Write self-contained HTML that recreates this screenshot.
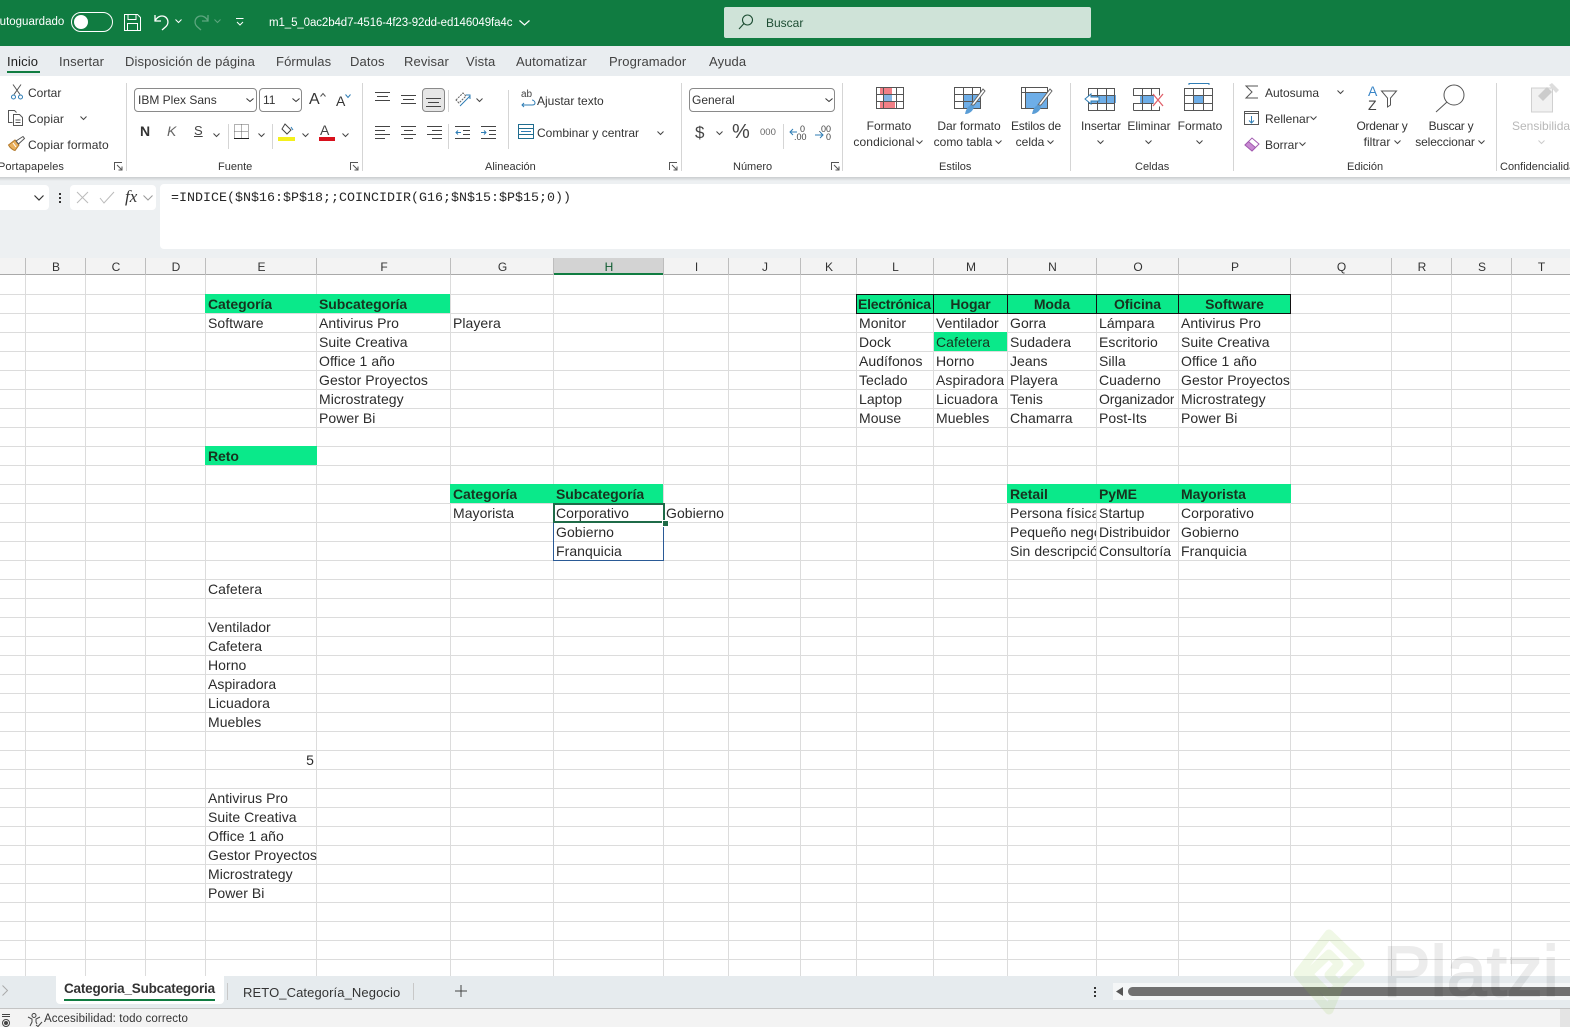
<!DOCTYPE html>
<html lang="es"><head><meta charset="utf-8"><title>Excel</title>
<style>
html,body{margin:0;padding:0;width:1570px;height:1027px;overflow:hidden;background:#fff;font-family:"Liberation Sans",sans-serif;color:#262626}
#p{position:relative;width:1570px;height:1027px;overflow:hidden}
.a{position:absolute}
.w{position:absolute;top:0;width:0;height:0}
.u{position:absolute;font-size:12px;line-height:16px;white-space:nowrap;color:#333}
.c{text-align:center}
.tab{position:absolute;top:54px;font-size:13px;line-height:16px;color:#424242;white-space:nowrap;letter-spacing:.13px}
.g{position:absolute;top:159px;font-size:11px;line-height:16px;color:#333;white-space:nowrap}
.sep{position:absolute;width:1px;background:#d5d5d5}
.vl{position:absolute;top:275px;height:701px;width:1px;background:#dcdcdc}
.hl{position:absolute;top:258px;height:17px;width:1px;background:#bdbdbd}
.ch{position:absolute;top:258px;height:17px;line-height:19px;font-size:12px;text-align:center;color:#333;padding-left:2px;box-sizing:border-box}
.t{position:absolute;font-size:14px;line-height:21px;height:20px;white-space:nowrap;overflow:hidden;color:#2b2b2b;letter-spacing:.05px}
.b{font-weight:bold;color:#17331f;letter-spacing:-.05px}
.f{position:absolute;background:#0ae98a;height:19px}
svg{position:absolute;overflow:visible}
.bd{position:absolute;background:#fff;border:1px solid #8a8a8a;border-radius:4px;box-sizing:border-box;font-size:12px;line-height:22px;padding-left:3px;color:#333}
</style></head><body><div id="p">

<div class="a" style="left:0;top:0;width:1570px;height:46px;background:#107c41"></div>
<div class="u" style="left:-8px;top:14px;color:#fff;font-size:11.500px">Autoguardado</div>
<div class="a" style="left:71px;top:12px;width:42px;height:20px;border:1px solid #fff;border-radius:11px;box-sizing:border-box"></div>
<div class="a" style="left:74px;top:15px;width:14px;height:14px;border-radius:50%;background:#fff"></div>
<svg style="left:124px;top:14px" width="17" height="17" fill="none" stroke="#fff" stroke-width="1"><path d="M.5.500h13l3 3v13H.5zM4 .5v5h8v-5M3.500 16.500v-7h10v7"/></svg>
<svg style="left:154px;top:14px" width="16" height="16" fill="none" stroke="#fff" stroke-width="1.300"><path d="M1 1v6h6M1.300 6.500C3 3 7 1 10.500 2.500c4 2 4.500 7 1.500 10L8 16"/></svg>
<svg style="left:175px;top:19px" width="7" height="5" fill="none" stroke="#fff"><path d="M.5.500l3 3 3-3"/></svg>
<svg style="left:193px;top:14px" width="16" height="16" fill="none" stroke="#5da67f" stroke-width="1.300"><path d="M15 1v6H9M14.700 6.500C13 3 9 1 5.500 2.500c-4 2-4.500 7-1.500 10L8 16"/></svg>
<svg style="left:214px;top:19px" width="7" height="5" fill="none" stroke="#5da67f"><path d="M.5.500l3 3 3-3"/></svg>
<svg style="left:236px;top:18px" width="8" height="8" fill="none" stroke="#fff"><path d="M0 .5h7.500M1 4l3 3 3-3"/></svg>
<div class="u" style="left:269px;top:15px;color:#fff;font-size:11.500px;letter-spacing:-.1px">m1_5_0ac2b4d7-4516-4f23-92dd-ed146049fa4c</div>
<svg style="left:519px;top:20px" width="11" height="6" fill="none" stroke="#fff" stroke-width="1.200"><path d="M.5.500l5 4.500 5-4.500"/></svg>
<div class="a" style="left:724px;top:7px;width:367px;height:31px;background:#cfe3d8;border-radius:2px"></div>
<svg style="left:738px;top:14px" width="16" height="16" fill="none" stroke="#1d4d33" stroke-width="1.100"><circle cx="9.500" cy="6" r="5"/><path d="M6 9.500L1 15"/></svg>
<div class="u" style="left:766px;top:15px;color:#1d4d33;font-size:12px">Buscar</div>

<div class="a" style="left:0;top:46px;width:1570px;height:31px;background:#e9edf0"></div>
<div class="tab" style="left:7px;color:#1e1e1e">Inicio</div>
<div class="a" style="left:7px;top:71px;width:33px;height:2px;background:#107c41"></div>
<div class="tab" style="left:59px">Insertar</div>
<div class="tab" style="left:125px">Disposición de página</div>
<div class="tab" style="left:276px">Fórmulas</div>
<div class="tab" style="left:350px">Datos</div>
<div class="tab" style="left:404px">Revisar</div>
<div class="tab" style="left:466px">Vista</div>
<div class="tab" style="left:516px">Automatizar</div>
<div class="tab" style="left:609px">Programador</div>
<div class="tab" style="left:709px">Ayuda</div>

<div class="a" style="left:0;top:76px;width:1570px;height:101px;background:#fff"></div>
<div class="sep" style="left:126px;top:83px;height:88px"></div>
<div class="sep" style="left:362px;top:83px;height:88px"></div>

<svg style="left:10px;top:84px" width="14" height="16" fill="none" stroke="#555"><path d="M3 .5l7 10M11 .5l-7 10"/><circle cx="3.500" cy="13" r="2" stroke="#2f7db5"/><circle cx="10.500" cy="13" r="2" stroke="#2f7db5"/></svg>
<div class="u" style="left:28px;top:85px">Cortar</div>
<svg style="left:8px;top:110px" width="16" height="16" fill="none" stroke="#555"><path d="M4.500 12.500H.5V.5h6l2 2"/><path d="M5.500 4.500h6l3 3v8h-9z"/><path d="M7.500 10h5M7.500 12.500h5"/></svg>
<div class="u" style="left:28px;top:111px;letter-spacing:.1px">Copiar</div>
<svg style="left:80px;top:116px" width="7" height="5" fill="none" stroke="#444"><path d="M.5.500l3 3 3-3"/></svg>
<svg style="left:8px;top:136px" width="17" height="15"><path d="M.5 9L7 4l4 5-4 5.500C5 14 2 12 .5 9z" fill="#eab05c" stroke="#b37a2b"/><path d="M8 5l7-4.500 1.500 2L10.500 8z" fill="#fff" stroke="#555"/><path d="M5 7l3 4" stroke="#fff"/></svg>
<div class="u" style="left:28px;top:137px;letter-spacing:.1px">Copiar formato</div>
<div class="g" style="left:-2px;letter-spacing:.1px">Portapapeles</div>
<svg style="left:114px;top:162px" width="9" height="9" fill="none" stroke="#555"><path d="M.5 8V.5H8M3 3l5 5M8 4.500V8H4.500"/></svg>

<div class="bd" style="left:134px;top:88px;width:123px;height:24px;line-height:22px;font-size:12px">IBM Plex Sans</div>
<svg style="left:246px;top:98px" width="8" height="5" fill="none" stroke="#333"><path d="M.5.500l3.500 3 3.500-3"/></svg>
<div class="bd" style="left:259px;top:88px;width:43px;height:24px">11</div>
<svg style="left:292px;top:98px" width="8" height="5" fill="none" stroke="#333"><path d="M.5.500l3.500 3 3.500-3"/></svg>
<div class="u" style="left:309px;top:91px;font-size:16px;line-height:18px">A</div>
<svg style="left:320px;top:93px" width="6" height="4" fill="none" stroke="#555"><path d="M.5 3.500l2.500-3 2.500 3"/></svg>
<div class="u" style="left:336px;top:93px;font-size:14px">A</div>
<svg style="left:345px;top:94px" width="6" height="4" fill="none" stroke="#2f7db5"><path d="M.5.500l2.500 3 2.500-3"/></svg>
<div class="u" style="left:140px;top:123px;font-size:14px;font-weight:bold">N</div>
<div class="u" style="left:167px;top:123px;font-size:14px;font-style:italic;color:#666">K</div>
<div class="u" style="left:194px;top:123px;font-size:13px;text-decoration:underline;color:#444">S</div>
<svg style="left:213px;top:133px" width="7" height="5" fill="none" stroke="#444"><path d="M.5.500l3 3 3-3"/></svg>
<div class="sep" style="left:228px;top:124px;height:25px"></div>
<svg style="left:234px;top:124px" width="15" height="15" fill="none" stroke="#666" stroke-dasharray="1 1"><path d="M.5.500h14v14H.5zM7.500.5v14M.5 7.500h14"/><path d="M0 14.500h15" stroke="#222" stroke-dasharray="none"/></svg>
<svg style="left:258px;top:133px" width="7" height="5" fill="none" stroke="#444"><path d="M.5.500l3 3 3-3"/></svg>
<div class="sep" style="left:272px;top:124px;height:25px"></div>
<svg style="left:279px;top:123px" width="16" height="13" fill="none" stroke="#444"><path d="M6 1l6 6-4 4-5-5z"/><path d="M12 4l2 3" stroke="#2f7db5"/></svg>
<div class="a" style="left:278px;top:137px;width:17px;height:4px;background:#f4f01c"></div>
<svg style="left:302px;top:133px" width="7" height="5" fill="none" stroke="#444"><path d="M.5.500l3 3 3-3"/></svg>
<div class="u" style="left:320px;top:122px;font-size:14px;color:#444">A</div>
<div class="a" style="left:319px;top:137px;width:16px;height:4px;background:#d8101c"></div>
<svg style="left:342px;top:133px" width="7" height="5" fill="none" stroke="#444"><path d="M.5.500l3 3 3-3"/></svg>
<div class="g" style="left:218px">Fuente</div>
<svg style="left:350px;top:162px" width="9" height="9" fill="none" stroke="#555"><path d="M.5 8V.5H8M3 3l5 5M8 4.500V8H4.500"/></svg>

<svg style="left:375px;top:92px" width="15" height="12" stroke="#444"><path d="M0 .5h15M2 4.500h11M0 8.500h15" fill="none"/></svg>
<svg style="left:401px;top:95px" width="15" height="12" stroke="#444"><path d="M0 .5h15M2 4.500h11M0 8.500h15" fill="none"/></svg>
<div class="a" style="left:422px;top:88px;width:23px;height:24px;background:#e6e6e6;border:1px solid #8a8a8a;border-radius:4px;box-sizing:border-box"></div>
<svg style="left:426px;top:98px" width="15" height="12" stroke="#444"><path d="M0 .5h15M2 4.500h11M0 8.500h15" fill="none"/></svg>
<div class="sep" style="left:448px;top:90px;height:22px"></div>
<svg style="left:455px;top:92px" width="16" height="15" fill="none"><path d="M1 8l7-7 3 3-7 7z" stroke="#666" stroke-dasharray="2 1"/><path d="M5 14L15 4M11 3h4v4" stroke="#2f7db5"/></svg>
<svg style="left:476px;top:98px" width="7" height="5" fill="none" stroke="#444"><path d="M.5.500l3 3 3-3"/></svg>
<svg style="left:375px;top:126px" width="15" height="13" stroke="#444"><path d="M0 .5h15M0 4.500h10M0 8.500h15M0 12.500h10" fill="none"/></svg>
<svg style="left:401px;top:126px" width="15" height="13" stroke="#444"><path d="M0 .5h15M3 4.500h9M0 8.500h15M3 12.500h9" fill="none"/></svg>
<svg style="left:427px;top:126px" width="15" height="13" stroke="#444"><path d="M0 .5h15M5 4.500h10M0 8.500h15M5 12.500h10" fill="none"/></svg>
<div class="sep" style="left:448px;top:124px;height:25px"></div>
<svg style="left:455px;top:126px" width="15" height="13" fill="none" stroke="#444"><path d="M0 .5h15M8 4.500h7M8 8.500h7M0 12.500h15"/><path d="M6 6.500H1M3 4.500l-2 2 2 2" stroke="#2f7db5"/></svg>
<svg style="left:481px;top:126px" width="15" height="13" fill="none" stroke="#444"><path d="M0 .5h15M8 4.500h7M8 8.500h7M0 12.500h15"/><path d="M0 6.500h5M3 4.500l2 2-2 2" stroke="#2f7db5"/></svg>
<div class="sep" style="left:508px;top:90px;height:59px"></div>

<div class="w" style="left:1px">
<div class="u" style="left:520px;top:90px;font-size:10px;line-height:10px;color:#444">ab</div>
<svg style="left:519px;top:100px" width="16" height="8" fill="none" stroke="#2f7db5"><path d="M2 5h10c2 0 3-1 3-2s-1-3-3-3M4 3L2 5l2 2"/></svg>
<div class="u" style="left:536px;top:93px">Ajustar texto</div>
<svg style="left:517px;top:124px" width="16" height="15" fill="none" stroke="#1f6c8f"><path d="M.5.500h15v14H.5zM.5 4.500h15M.5 10.500h15"/><path d="M3 7.500h10" stroke="#2f7db5"/></svg>
<div class="u" style="left:536px;top:125px">Combinar y centrar</div>
<svg style="left:656px;top:131px" width="7" height="5" fill="none" stroke="#444"><path d="M.5.500l3 3 3-3"/></svg>
<div class="g" style="left:484px">Alineación</div>
<svg style="left:668px;top:162px" width="9" height="9" fill="none" stroke="#555"><path d="M.5 8V.5H8M3 3l5 5M8 4.500V8H4.500"/></svg>
<div class="sep" style="left:680px;top:83px;height:88px"></div>
<div class="bd" style="left:688px;top:88px;width:146px;height:24px;padding-left:2px">General</div>
<svg style="left:824px;top:98px" width="8" height="5" fill="none" stroke="#333"><path d="M.5.500l3.500 3 3.500-3"/></svg>
<div class="u" style="left:694px;top:123px;font-size:17px;line-height:19px;color:#444">$</div>
<svg style="left:715px;top:131px" width="7" height="5" fill="none" stroke="#444"><path d="M.5.500l3 3 3-3"/></svg>
<div class="u" style="left:731px;top:122px;font-size:20px;line-height:20px;color:#444">%</div>
<div class="u" style="left:759px;top:125px;font-size:9.500px;color:#666">000</div>
<div class="sep" style="left:782px;top:124px;height:25px"></div>
<div class="u" style="left:793px;top:125px;font-size:9px;line-height:8px;color:#444;text-align:right;width:11px">0<br>.00</div>
<svg style="left:788px;top:128px" width="8" height="9" fill="none" stroke="#2f7db5"><path d="M8 4H1M4 1L1 4l3 3"/></svg>
<div class="u" style="left:817px;top:125px;font-size:9px;line-height:8px;color:#444;text-align:right;width:13px">.00<br>0</div>
<svg style="left:814px;top:131px" width="9" height="9" fill="none" stroke="#2f7db5"><path d="M0 4h8M5 1l3 3-3 3"/></svg>
<div class="g" style="left:732px">Número</div>
<svg style="left:830px;top:162px" width="9" height="9" fill="none" stroke="#555"><path d="M.5 8V.5H8M3 3l5 5M8 4.500V8H4.500"/></svg>
<div class="sep" style="left:841px;top:83px;height:88px"></div>
</div>

<div class="w" style="left:2px">
<svg style="left:874px;top:87px" width="28" height="22"><rect x="4" y="1" width="12" height="6" fill="#f17f86"/><rect x="7" y="7" width="9" height="7" fill="#82b4e4"/><rect x="4" y="15" width="15" height="6" fill="#f17f86"/><path d="M.5.500h27v21H.5zM.5 7.500h27M.5 14.500h27M7.500.5v21M20.500.5v21" fill="none" stroke="#555"/></svg>
<div class="u c" style="left:847px;top:118px;width:80px">Formato</div>
<div class="u c" style="left:842px;top:134px;width:80px;letter-spacing:.1px">condicional</div>
<svg style="left:914px;top:140px" width="7" height="5" fill="none" stroke="#444"><path d="M.5.500l3 3 3-3"/></svg>
<svg style="left:952px;top:87px" width="32" height="28"><rect x="10" y="8" width="17" height="13" fill="#6eaee8"/><path d="M.5.500h26v21H.5zM.5 7.500h26M.5 14.500h26M9.500.5v21M18.500.5v21" fill="none" stroke="#555"/><path d="M31 4L20 18l-3 0L29 2z" fill="#fff" stroke="#666"/><path d="M11 27c1-5 3-8 6-9l3 1c0 4-4 8-9 8z" fill="#5a9dd6"/></svg>
<div class="u c" style="left:927px;top:118px;width:80px">Dar formato</div>
<div class="u c" style="left:921px;top:134px;width:80px">como tabla</div>
<svg style="left:993px;top:140px" width="7" height="5" fill="none" stroke="#444"><path d="M.5.500l3 3 3-3"/></svg>
<svg style="left:1019px;top:87px" width="32" height="28"><rect x="5" y="5" width="22" height="16" fill="#6eaee8"/><path d="M.5.500h26v21H.5zM.5 5.500h26M4.500.5v21" fill="none" stroke="#555"/><path d="M31 4L20 18l-3 0L29 2z" fill="#fff" stroke="#666"/><path d="M11 27c1-5 3-8 6-9l3 1c0 4-4 8-9 8z" fill="#5a9dd6"/></svg>
<div class="u c" style="left:994px;top:118px;width:80px;letter-spacing:-.2px">Estilos de</div>
<div class="u c" style="left:988px;top:134px;width:80px">celda</div>
<svg style="left:1045px;top:140px" width="7" height="5" fill="none" stroke="#444"><path d="M.5.500l3 3 3-3"/></svg>
<div class="g" style="left:937px">Estilos</div>
<div class="sep" style="left:1068px;top:83px;height:88px"></div>

<svg style="left:1082px;top:88px" width="32" height="24"><rect x="6" y="7" width="26" height="8" fill="#6eaee8"/><path d="M4.500.5h26v22h-26zM4.500 7.500h26M4.500 15.500h26M13.500.5v22M22.500.5v22" fill="none" stroke="#555"/><path d="M1 11l6-5v3h8v4H7v3z" fill="#fff" stroke="#2f7db5"/></svg>
<div class="u c" style="left:1059px;top:118px;width:80px;letter-spacing:-.1px">Insertar</div>
<svg style="left:1095px;top:140px" width="7" height="5" fill="none" stroke="#444"><path d="M.5.500l3 3 3-3"/></svg>
<svg style="left:1131px;top:88px" width="31" height="24"><rect x="7" y="7" width="14" height="8" fill="#6eaee8"/><path d="M.5.500h26v7M.5 22.500h26v-4M.5.500v7h20M.5 22.500v-7h20M9.500.5v22M18.500.5v7M18.500 15v7" fill="none" stroke="#555"/><path d="M20 6l10 12M30 6L20 18" stroke="#e0606a" stroke-width="1.300"/></svg>
<div class="u c" style="left:1107px;top:118px;width:80px">Eliminar</div>
<svg style="left:1143px;top:140px" width="7" height="5" fill="none" stroke="#444"><path d="M.5.500l3 3 3-3"/></svg>
<svg style="left:1182px;top:83px" width="29" height="28"><path d="M5 .5h20M5 0v2M25 0v2" fill="none" stroke="#2f7db5"/><rect x="9" y="13" width="11" height="8" fill="#6eaee8"/><path d="M.5 5.500h28v22H.5zM.5 12.500h28M.5 20.500h28M9.500 5.500v22M19.500 5.500v22" fill="none" stroke="#555"/></svg>
<div class="u c" style="left:1158px;top:118px;width:80px">Formato</div>
<svg style="left:1194px;top:140px" width="7" height="5" fill="none" stroke="#444"><path d="M.5.500l3 3 3-3"/></svg>
<div class="g" style="left:1133px">Celdas</div>
<div class="sep" style="left:1231px;top:83px;height:88px"></div>

<svg style="left:1243px;top:85px" width="14" height="14" fill="none" stroke="#555"><path d="M13 1H1l6 6-6 6h12"/></svg>
<div class="u" style="left:1263px;top:85px">Autosuma</div>
<svg style="left:1335px;top:90px" width="7" height="5" fill="none" stroke="#444"><path d="M.5.500l3 3 3-3"/></svg>
<svg style="left:1242px;top:111px" width="15" height="14" fill="none" stroke="#555"><path d="M.5.500h14v13H.5zM.5 2.500h14"/><path d="M7.500 5v7M5 9.500l2.500 2.500L10 9.500" stroke="#2f7db5"/></svg>
<div class="u" style="left:1263px;top:111px">Rellenar</div>
<svg style="left:1308px;top:116px" width="7" height="5" fill="none" stroke="#444"><path d="M.5.500l3 3 3-3"/></svg>
<svg style="left:1242px;top:137px" width="16" height="15"><path d="M1 8l7-7 7 6-7 7z" fill="#fff" stroke="#a25bb0"/><path d="M1 8l3.500-3.500 7 6L8 14z" fill="#c88ad2" stroke="#a25bb0"/></svg>
<div class="u" style="left:1263px;top:137px">Borrar</div>
<svg style="left:1297px;top:142px" width="7" height="5" fill="none" stroke="#444"><path d="M.5.500l3 3 3-3"/></svg>
<div class="u" style="left:1366px;top:84px;font-size:14px;line-height:14px;color:#3b86c7">A</div>
<div class="u" style="left:1366px;top:98px;font-size:14px;line-height:14px;color:#444">Z</div>
<svg style="left:1379px;top:90px" width="16" height="18" fill="none" stroke="#555"><path d="M.5 1h15l-6 7v7l-3 2V8z"/></svg>
<div class="u c" style="left:1340px;top:118px;width:80px;letter-spacing:-.25px">Ordenar y</div>
<div class="u c" style="left:1335px;top:134px;width:80px">filtrar</div>
<svg style="left:1392px;top:140px" width="7" height="5" fill="none" stroke="#444"><path d="M.5.500l3 3 3-3"/></svg>
<svg style="left:1433px;top:84px" width="30" height="30" fill="none" stroke="#555"><circle cx="19" cy="11" r="10"/><path d="M12 18L1 28"/></svg>
<div class="u c" style="left:1409px;top:118px;width:80px;letter-spacing:-.25px">Buscar y</div>
<div class="u c" style="left:1403px;top:134px;width:80px;letter-spacing:-.1px">seleccionar</div>
<svg style="left:1476px;top:140px" width="7" height="5" fill="none" stroke="#444"><path d="M.5.500l3 3 3-3"/></svg>
<div class="g" style="left:1345px">Edición</div>
<div class="sep" style="left:1494px;top:83px;height:88px"></div>

<svg style="left:1529px;top:83px" width="28" height="30"><path d="M.5 5h21v24H.5z" fill="#f1f1f1" stroke="#d0d0d0"/><path d="M7 13l9-9 5 5-9 9z" fill="#ccc"/><path d="M18 2l3-2 7 7-3 3z" fill="#ddd"/></svg>
<div class="u" style="left:1510px;top:118px;color:#b8b8b8">Sensibilidad</div>
<svg style="left:1536px;top:140px" width="7" height="5" fill="none" stroke="#ccc"><path d="M.5.500l3 3 3-3"/></svg>
<div class="g" style="left:1498px">Confidencialidad</div>
</div>

<div class="a" style="left:0;top:177px;width:1570px;height:81px;background:#edf0f2"></div>
<div class="a" style="left:0;top:177px;width:1570px;height:4px;background:linear-gradient(to bottom,#c9ccce,#edf0f2)"></div>
<div class="a" style="left:-6px;top:185px;width:55px;height:25px;background:#fff;border-radius:4px"></div>
<svg style="left:34px;top:195px" width="10" height="6" fill="none" stroke="#333" stroke-width="1.200"><path d="M.5.500l4.500 4.500 4.500-4.500"/></svg>
<div class="a" style="left:59px;top:193px;width:2px;height:2px;background:#333;box-shadow:0 4px #333,0 8px #333"></div>
<div class="a" style="left:70px;top:185px;width:86px;height:25px;background:#fff;border-radius:4px"></div>
<svg style="left:76px;top:191px" width="14" height="13" fill="none" stroke="#bbb"><path d="M1 1l11 11M12 1L1 12"/></svg>
<svg style="left:99px;top:191px" width="16" height="13" fill="none" stroke="#bbb"><path d="M1 7l4 5L15 1"/></svg>
<div class="u" style="left:125px;top:188px;font:italic 17px/18px 'Liberation Serif',serif;color:#333">fx</div>
<svg style="left:143px;top:195px" width="10" height="6" fill="none" stroke="#999"><path d="M.5.500l4.500 4.500 4.500-4.500"/></svg>
<div class="a" style="left:160px;top:184px;width:1420px;height:65px;background:#fff;border-radius:4px"></div>
<div class="a" style="left:171px;top:189px;font:13.300px/18px 'Liberation Mono',monospace;color:#262626;white-space:nowrap;letter-spacing:.02px">=INDICE($N$16:$P$18;;COINCIDIR(G16;$N$15:$P$15;0))</div>

<div class="a" style="left:0;top:258px;width:1570px;height:17px;background:#f3f3f3"></div>
<div class="a" style="left:553px;top:258px;width:110px;height:17px;background:#d3d3d3"></div>
<div class="a" style="left:0;top:274px;width:1570px;height:1px;background:#a9a9a9"></div>
<div class="a" style="left:553px;top:273px;width:111px;height:2px;background:#107c41"></div>
<div class="a" style="left:0;top:276px;width:1570px;height:700px;background:repeating-linear-gradient(to bottom,#fff 0,#fff 18px,#dcdcdc 18px,#dcdcdc 19px)"></div>

<div class="hl" style="left:25px"></div><div class="hl" style="left:85px"></div><div class="hl" style="left:145px"></div><div class="hl" style="left:205px"></div><div class="hl" style="left:316px"></div><div class="hl" style="left:450px"></div>
<div class="vl" style="left:25px"></div><div class="vl" style="left:85px"></div><div class="vl" style="left:145px"></div><div class="vl" style="left:205px"></div><div class="vl" style="left:316px"></div><div class="vl" style="left:450px"></div>
<div class="ch" style="left:25px;width:60px">B</div><div class="ch" style="left:85px;width:60px">C</div><div class="ch" style="left:145px;width:60px">D</div><div class="ch" style="left:205px;width:111px">E</div><div class="ch" style="left:316px;width:134px">F</div>

<div class="hl" style="left:1391px"></div><div class="hl" style="left:1451px"></div><div class="hl" style="left:1511px"></div>
<div class="vl" style="left:1391px"></div><div class="vl" style="left:1451px"></div><div class="vl" style="left:1511px"></div>
<div class="ch" style="left:1290px;width:101px">Q</div><div class="ch" style="left:1391px;width:60px">R</div><div class="ch" style="left:1451px;width:60px">S</div><div class="ch" style="left:1511px;width:59px">T</div>

<div class="f" style="left:205px;top:294px;width:245px"></div>
<div class="f" style="left:205px;top:446px;width:112px"></div>
<div class="t b" style="left:208px;top:294px">Categoría</div>
<div class="t b" style="left:319px;top:294px">Subcategoría</div>
<div class="t" style="left:208px;top:313px">Software</div><div class="t" style="left:319px;top:313px">Antivirus Pro</div>
<div class="t" style="left:319px;top:332px">Suite Creativa</div>
<div class="t" style="left:319px;top:351px">Office 1 año</div>
<div class="t" style="left:319px;top:370px">Gestor Proyectos</div>
<div class="t" style="left:319px;top:389px">Microstrategy</div>
<div class="t" style="left:319px;top:408px">Power Bi</div>
<div class="t b" style="left:208px;top:446px">Reto</div>
<div class="t" style="left:208px;top:579px">Cafetera</div>
<div class="t" style="left:208px;top:617px">Ventilador</div><div class="t" style="left:208px;top:636px">Cafetera</div><div class="t" style="left:208px;top:655px">Horno</div><div class="t" style="left:208px;top:674px">Aspiradora</div><div class="t" style="left:208px;top:693px">Licuadora</div><div class="t" style="left:208px;top:712px">Muebles</div>
<div class="t" style="left:206px;top:750px;width:108px;text-align:right">5</div>
<div class="t" style="left:208px;top:788px">Antivirus Pro</div><div class="t" style="left:208px;top:807px">Suite Creativa</div><div class="t" style="left:208px;top:826px">Office 1 año</div><div class="t" style="left:208px;top:845px">Gestor Proyectos</div><div class="t" style="left:208px;top:864px">Microstrategy</div><div class="t" style="left:208px;top:883px">Power Bi</div>

<div class="w" style="left:1px">
<div class="hl" style="left:552px"></div><div class="hl" style="left:662px"></div><div class="hl" style="left:727px"></div><div class="hl" style="left:799px"></div><div class="hl" style="left:855px"></div><div class="hl" style="left:932px"></div><div class="hl" style="left:1006px"></div><div class="hl" style="left:1095px"></div><div class="hl" style="left:1177px"></div><div class="hl" style="left:1289px"></div>
<div class="vl" style="left:552px"></div><div class="vl" style="left:662px"></div><div class="vl" style="left:727px"></div><div class="vl" style="left:799px"></div><div class="vl" style="left:855px"></div><div class="vl" style="left:932px"></div><div class="vl" style="left:1006px"></div><div class="vl" style="left:1095px"></div><div class="vl" style="left:1177px"></div><div class="vl" style="left:1289px"></div>
<div class="ch" style="left:449px;width:103px">G</div><div class="ch" style="left:552px;width:110px;color:#0e5c30">H</div><div class="ch" style="left:662px;width:65px">I</div><div class="ch" style="left:727px;width:72px">J</div><div class="ch" style="left:799px;width:56px">K</div><div class="ch" style="left:855px;width:77px">L</div><div class="ch" style="left:932px;width:74px">M</div><div class="ch" style="left:1006px;width:89px">N</div><div class="ch" style="left:1095px;width:82px">O</div><div class="ch" style="left:1177px;width:112px">P</div>

<div class="f" style="left:449px;top:484px;width:213px"></div>
<div class="f" style="left:1006px;top:484px;width:284px"></div>
<div class="f" style="left:933px;top:332px;width:73px"></div>
<div class="f" style="left:855px;top:294px;width:434px"></div>
<div class="a" style="left:855px;top:294px;width:435px;height:20px;box-sizing:border-box;border:1px solid #111"></div>
<div class="a" style="left:932px;top:294px;width:1px;height:19px;background:#111"></div>
<div class="a" style="left:1006px;top:294px;width:1px;height:19px;background:#111"></div>
<div class="a" style="left:1095px;top:294px;width:1px;height:19px;background:#111"></div>
<div class="a" style="left:1177px;top:294px;width:1px;height:19px;background:#111"></div>

<div class="t b" style="left:857px;top:294px;width:75px;letter-spacing:-.25px">Electrónica</div>
<div class="t b c" style="left:933px;top:294px;width:73px">Hogar</div>
<div class="t b c" style="left:1007px;top:294px;width:88px">Moda</div>
<div class="t b c" style="left:1096px;top:294px;width:81px">Oficina</div>
<div class="t b c" style="left:1178px;top:294px;width:111px">Software</div>

<div class="t" style="left:452px;top:313px">Playera</div><div class="t" style="left:858px;top:313px">Monitor</div><div class="t" style="left:935px;top:313px">Ventilador</div><div class="t" style="left:1009px;top:313px">Gorra</div><div class="t" style="left:1098px;top:313px">Lámpara</div><div class="t" style="left:1180px;top:313px">Antivirus Pro</div>
<div class="t" style="left:858px;top:332px">Dock</div><div class="t" style="left:935px;top:332px;color:#17331f">Cafetera</div><div class="t" style="left:1009px;top:332px">Sudadera</div><div class="t" style="left:1098px;top:332px">Escritorio</div><div class="t" style="left:1180px;top:332px">Suite Creativa</div>
<div class="t" style="left:858px;top:351px">Audífonos</div><div class="t" style="left:935px;top:351px">Horno</div><div class="t" style="left:1009px;top:351px">Jeans</div><div class="t" style="left:1098px;top:351px">Silla</div><div class="t" style="left:1180px;top:351px">Office 1 año</div>
<div class="t" style="left:858px;top:370px">Teclado</div><div class="t" style="left:935px;top:370px">Aspiradora</div><div class="t" style="left:1009px;top:370px">Playera</div><div class="t" style="left:1098px;top:370px">Cuaderno</div><div class="t" style="left:1180px;top:370px">Gestor Proyectos</div>
<div class="t" style="left:858px;top:389px">Laptop</div><div class="t" style="left:935px;top:389px">Licuadora</div><div class="t" style="left:1009px;top:389px">Tenis</div><div class="t" style="left:1098px;top:389px;letter-spacing:-.15px">Organizador</div><div class="t" style="left:1180px;top:389px">Microstrategy</div>
<div class="t" style="left:858px;top:408px">Mouse</div><div class="t" style="left:935px;top:408px">Muebles</div><div class="t" style="left:1009px;top:408px">Chamarra</div><div class="t" style="left:1098px;top:408px">Post-Its</div><div class="t" style="left:1180px;top:408px">Power Bi</div>
<div class="t b" style="left:452px;top:484px">Categoría</div><div class="t b" style="left:555px;top:484px">Subcategoría</div><div class="t b" style="left:1009px;top:484px">Retail</div><div class="t b" style="left:1098px;top:484px">PyME</div><div class="t b" style="left:1180px;top:484px">Mayorista</div>
<div class="t" style="left:452px;top:503px">Mayorista</div><div class="t" style="left:555px;top:503px">Corporativo</div><div class="t" style="left:665px;top:503px">Gobierno</div><div class="t" style="left:1009px;top:503px;width:86px">Persona física</div><div class="t" style="left:1098px;top:503px">Startup</div><div class="t" style="left:1180px;top:503px">Corporativo</div>
<div class="t" style="left:555px;top:522px">Gobierno</div><div class="t" style="left:1009px;top:522px;width:86px">Pequeño negocio</div><div class="t" style="left:1098px;top:522px">Distribuidor</div><div class="t" style="left:1180px;top:522px">Gobierno</div>
<div class="t" style="left:555px;top:541px">Franquicia</div><div class="t" style="left:1009px;top:541px;width:86px">Sin descripción</div><div class="t" style="left:1098px;top:541px">Consultoría</div><div class="t" style="left:1180px;top:541px">Franquicia</div>

<div class="a" style="left:552px;top:503px;width:111px;height:58px;box-sizing:border-box;border:1px solid #2a5a96"></div>
<div class="a" style="left:552px;top:503px;width:112px;height:20px;box-sizing:border-box;border:2px solid #1f6b48"></div>
<div class="a" style="left:661px;top:520px;width:5px;height:5px;background:#1f6b48;border:1px solid #fff;box-sizing:content-box"></div>
</div>

<div class="a" style="left:0;top:976px;width:1570px;height:32px;background:#e6ebee"></div>
<div class="a" style="left:0;top:1008px;width:1570px;height:1px;background:#c4c4c4"></div>
<div class="a" style="left:0;top:1009px;width:1570px;height:18px;background:#f3f3f3"></div>
<svg style="left:2px;top:985px" width="6" height="11" fill="none" stroke="#aaa"><path d="M.5.500l5 5-5 5"/></svg>
<div class="a" style="left:56px;top:976px;width:168px;height:28px;background:#fff;border-radius:0 0 4px 4px"></div>
<div class="a" style="left:64px;top:981px;font-size:13.500px;line-height:16px;font-weight:bold;color:#333;letter-spacing:-.2px;white-space:nowrap">Categoria_Subcategoria</div>
<div class="a" style="left:64px;top:999px;width:151px;height:2px;background:#107c41"></div>
<div class="sep" style="left:227px;top:983px;height:17px;background:#c8c8c8"></div>
<div class="a" style="left:243px;top:985px;font-size:13px;line-height:16px;color:#333;white-space:nowrap;letter-spacing:.1px">RETO_Categoría_Negocio</div>
<div class="sep" style="left:413px;top:983px;height:17px;background:#c8c8c8"></div>
<svg style="left:455px;top:985px" width="12" height="12" stroke="#444"><path d="M6 0v12M0 6h12"/></svg>
<div class="a" style="left:1094px;top:987px;width:2px;height:2px;background:#333;box-shadow:0 4px #333,0 8px #333"></div>
<div class="a" style="left:1113px;top:983px;width:457px;height:17px;background:#f4f6f7"></div>
<svg style="left:1116px;top:987px" width="7" height="9"><path d="M7 0v9L0 4.500z" fill="#555"/></svg>
<div class="a" style="left:1128px;top:987px;width:442px;height:9px;background:#707070;border-radius:5px 0 0 5px"></div>
<svg style="left:1px;top:1014px" width="10" height="13" fill="none" stroke="#444"><path d="M1 .5h8M1 2.500h8"/><circle cx="5" cy="9" r="3.500"/><circle cx="5" cy="9" r="1.500" fill="#444"/></svg>
<svg style="left:27px;top:1013px" width="16" height="14" fill="none" stroke="#444"><circle cx="7" cy="2.500" r="2"/><path d="M1 4l4 2v3l-2 4M13 4L9 6v3l1 2M9 12l2 1.500L15 9"/></svg>
<div class="a" style="left:44px;top:1012px;font-size:11.500px;line-height:15px;color:#333;white-space:nowrap;letter-spacing:.12px">Accesibilidad: todo correcto</div>
<div class="a" style="left:1560px;top:1009px;width:10px;height:18px;background:#e4e4e4"></div>

<svg style="left:1292px;top:928px" width="75" height="88" fill="none" opacity=".13"><path d="M37 6L68 36 47 57 37 47 47 36 37 26 16 46 37 67 47 58 37 82 6 46z" stroke="#8ec63f" stroke-width="9" stroke-linejoin="round"/></svg>
<div class="a" style="left:1383px;top:931px;font-size:71px;line-height:84px;color:#000;opacity:.07;white-space:nowrap;-webkit-text-stroke:2px #000;letter-spacing:.4px">Platzi</div>
</div></body></html>
